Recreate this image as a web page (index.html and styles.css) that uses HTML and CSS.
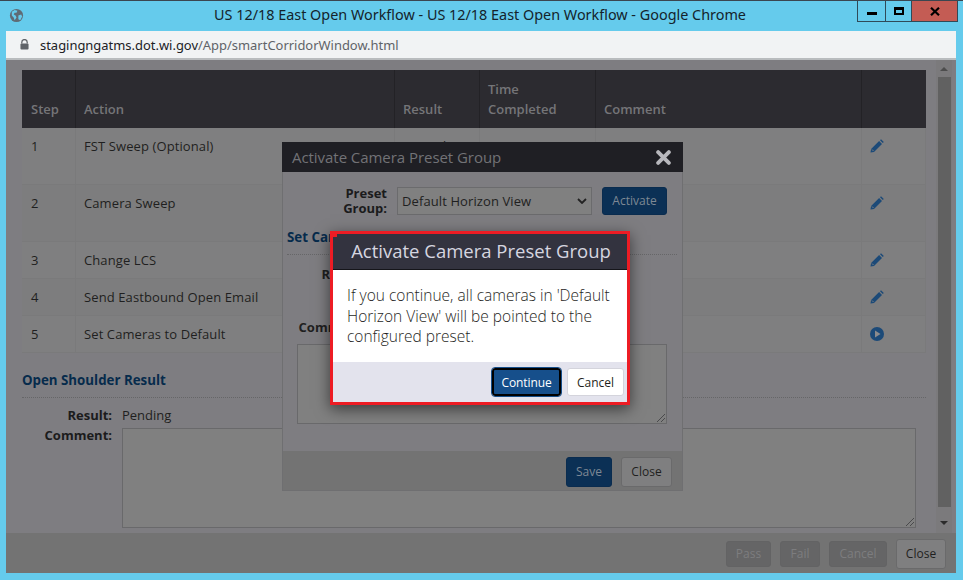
FILE: index.html
```html
<!DOCTYPE html>
<html lang="en">
<head>
<meta charset="utf-8">
<title>US 12/18 East Open Workflow</title>
<link rel="stylesheet" href="styles.css">
</head>
<body>
<div class="window">
  <header class="titlebar">
    <svg class="globe" viewBox="0 0 16 16" width="15" height="15"><circle cx="8" cy="8" r="7" fill="#5f6b75"/><path d="M3 4l3-2 3 1-1 2-2 0-1 2 2 1 1 2-2 3-1-3-2-2zM10 8l3-1 1 2-2 4-2-1z" fill="#65cbec"/></svg>
    <span class="wintitle">US 12/18 East Open Workflow - US 12/18 East Open Workflow - Google Chrome</span>
    <div class="wincontrols">
      <div class="wc wc-min"><i></i></div>
      <div class="wc wc-max"><i></i></div>
      <div class="wc wc-close"><svg viewBox="0 0 10 9" width="10" height="9"><path d="M1 0.8L9 8.2M9 0.8L1 8.2" stroke="#000" stroke-width="2.2"/></svg></div>
    </div>
  </header>
  <div class="addressbar">
    <svg class="lock" viewBox="0 0 10 12" width="9" height="11"><path d="M2 5V3.500a3 3 0 0 1 6 0V5" fill="none" stroke="#5f6368" stroke-width="1.400"/><rect x="0.500" y="5" width="9" height="6.500" rx="1" fill="#5f6368"/></svg>
    <span class="host">stagingngatms.dot.wi.gov</span><span class="path">/App/smartCorridorWindow.html</span>
  </div>
  <main class="content">
    <div class="scrollarea">
      <div class="page">
        <table class="steps">
          <thead>
            <tr><th class="c-step">Step</th><th class="c-action">Action</th><th class="c-result">Result</th><th class="c-time">Time<br>Completed</th><th class="c-comment">Comment</th><th class="c-edit"></th></tr>
          </thead>
          <tbody>
            <tr class="r57 odd"><td>1</td><td>FST Sweep (Optional)</td><td>Passed</td><td>06/23/2020</td><td></td><td><svg class="ico" viewBox="0 0 14 14" width="14" height="14"><path d="M0.500 13.500l0.600-3.500 8-8 2.900 2.900-8 8zM10 1.200l1-1 2.800 2.800-1 1z" fill="#1c4a78"/><path d="M2 10.500l1.500 1.500" stroke="#7f7f80"/></svg></td></tr>
            <tr class="r57"><td>2</td><td>Camera Sweep</td><td></td><td></td><td></td><td><svg class="ico" viewBox="0 0 14 14" width="14" height="14"><path d="M0.500 13.500l0.600-3.500 8-8 2.900 2.900-8 8zM10 1.200l1-1 2.800 2.800-1 1z" fill="#1c4a78"/><path d="M2 10.500l1.500 1.500" stroke="#7f7f80"/></svg></td></tr>
            <tr class="r37 odd"><td>3</td><td>Change LCS</td><td></td><td></td><td></td><td><svg class="ico" viewBox="0 0 14 14" width="14" height="14"><path d="M0.500 13.500l0.600-3.500 8-8 2.900 2.900-8 8zM10 1.200l1-1 2.800 2.800-1 1z" fill="#1c4a78"/><path d="M2 10.500l1.500 1.500" stroke="#7f7f80"/></svg></td></tr>
            <tr class="r37"><td>4</td><td>Send Eastbound Open Email</td><td></td><td></td><td></td><td><svg class="ico" viewBox="0 0 14 14" width="14" height="14"><path d="M0.500 13.500l0.600-3.500 8-8 2.900 2.900-8 8zM10 1.200l1-1 2.800 2.800-1 1z" fill="#1c4a78"/><path d="M2 10.500l1.500 1.500" stroke="#7f7f80"/></svg></td></tr>
            <tr class="r37 odd"><td>5</td><td>Set Cameras to Default</td><td></td><td></td><td></td><td><svg class="ico" viewBox="0 0 14 14" width="14" height="14"><circle cx="7" cy="7" r="7" fill="#1c4a78"/><path d="M5 3.500l5.500 3.500-5.500 3.500z" fill="#8b8b8d"/></svg></td></tr>
          </tbody>
        </table>
        <h3 class="section">Open Shoulder Result</h3>
        <div class="formrow"><label>Result:</label><span>Pending</span></div>
        <div class="formrow"><label>Comment:</label><div class="textarea big"><svg class="grip" viewBox="0 0 9 9" width="9" height="9"><path d="M1 9L9 1M5 9L9 5" stroke="#4a4a4c"/></svg></div></div>
      </div>
      <div class="scrollbar">
        <div class="arrow up"></div>
        <div class="thumb"></div>
        <div class="arrow down"></div>
      </div>
    </div>
    <footer class="pagefoot">
      <button class="btn dis w45">Pass</button><button class="btn dis w40">Fail</button><button class="btn dis w58">Cancel</button><button class="btn plain w50">Close</button>
    </footer>

    <section class="modal-back">
      <div class="mb-head"><span>Activate Camera Preset Group</span><svg viewBox="0 0 14 14" width="15" height="15"><path d="M2 2L12 12M12 2L2 12" stroke="#b8b8bd" stroke-width="3.600" stroke-linecap="round"/></svg></div>
      <div class="mb-body">
        <div class="preset"><label>Preset<br>Group:</label><div class="select">Default Horizon View<svg viewBox="0 0 10 6" width="10" height="6"><path d="M1 1l4 4 4-4" fill="none" stroke="#222" stroke-width="1.800"/></svg></div><button class="btn blue w65">Activate</button></div>
        <h4 class="section sub">Set Camera Result</h4>
        <div class="mb-row"><label>Result:</label></div>
        <div class="mb-row mb-c"><label>Comment:</label></div>
        <div class="textarea small"><svg class="grip" viewBox="0 0 9 9" width="9" height="9"><path d="M1 9L9 1M5 9L9 5" stroke="#4a4a4c"/></svg></div>
      </div>
      <div class="mb-foot"><button class="btn blue w46">Save</button><button class="btn plain w51">Close</button></div>
    </section>

    <section class="modal-front">
      <div class="mf-head">Activate Camera Preset Group</div>
      <div class="mf-body">If you continue, all cameras in 'Default Horizon View' will be pointed to the configured preset.</div>
      <div class="mf-foot"><button class="mf-btn go">Continue</button><button class="mf-btn no">Cancel</button></div>
    </section>
  </main>
</div>
</body>
</html>
```
FILE: styles.css
```css
* { box-sizing: border-box; }
html, body { margin: 0; height: 100%; }
body { font-family: "Open Sans", "Noto Sans", sans-serif; font-size: 13px; color: #1f1f20; overflow: hidden; }
.window { width: 963px; height: 580px; background: #65cbec; border-top: 1px solid #3b4650; display: flex; flex-direction: column; padding: 0 7px 7px 6px; }
.titlebar { height: 30px; flex: none; display: flex; align-items: center; position: relative; margin: 0 -7px 0 -6px; padding-left: 9px; }
.globe { flex: none; margin-top: -1px; }
.wintitle { position: absolute; left: 0; width: 960px; text-align: center; font-family: "Noto Sans", "Open Sans", sans-serif; font-size: 14.4px; color: #14232b; top: 4px; line-height: 20px; }
.wincontrols { position: absolute; right: 5px; top: 0; display: flex; height: 21px; border: 1px solid #2f4a58; border-top: 0; }
.wc { display: flex; align-items: center; justify-content: center; height: 20px; }
.wc-min { width: 28px; border-right: 1px solid #2f4a58; }
.wc-min i { display: block; width: 10px; height: 3px; background: #000; margin-top: 5px; }
.wc-max { width: 26px; border-right: 1px solid #2f4a58; }
.wc-max i { display: block; width: 10px; height: 8px; border: 2px solid #000; border-top-width: 3px; }
.wc-close { width: 45px; background: #c45c54; }
.addressbar { height: 29px; flex: none; background: #f1f3f4; border-bottom: 2px solid #b9bcbe; display: flex; align-items: center; padding-left: 14px; font-family: "Noto Sans", "Open Sans", sans-serif; font-size: 12.95px; }
.lock { margin-right: 11px; }
.host { color: #202124; }
.path { color: #5f6368; }
.content { flex: 1; position: relative; background: #7e7d81; display: flex; flex-direction: column; min-height: 0; overflow: hidden; }
.scrollarea { flex: 1; display: flex; min-height: 0; }
.page { flex: 1; padding: 10px 10px 0 16px; min-width: 0; }
.steps { width: 904px; border-collapse: separate; border-spacing: 0; table-layout: fixed; }
.steps th { background: #2c2b30; color: #757578; font-weight: 600; font-size: 13px; text-align: left; vertical-align: bottom; padding: 0 8px 9px; line-height: 20px; height: 58px; border-right: 1px solid #232226; }
.steps th:first-child, .steps td:first-child { padding-left: 9px; }
.steps th:last-child { border-right: 0; }
.c-step { width: 54px; } .c-action { width: 319px; } .c-result { width: 85px; } .c-time { width: 116px; } .c-comment { width: 266px; } .c-edit { width: 64px; }
.steps td { padding: 9px 8px 0 8px; vertical-align: top; line-height: 18px; letter-spacing: .1px; border-right: 1px solid #7a7a7b; border-bottom: 1px solid #7a7a7b; background: #7d7d7e; color: #1f1f20; }
.steps tr.odd td { background: #7f7f80; }
.r57 td { height: 57px; }
.r37 td { height: 37px; }
.ico { display: block; margin-top: 2px; }
.section { margin: 0; color: #062b4c; font-size: 13.3px; font-weight: 700; }
.page > .section { margin-top: 18px; padding-bottom: 8px; border-bottom: 1px dotted #666668; height: 27px; line-height: 18px; }
.formrow { display: flex; margin-top: 8px; line-height: 18px; }
.formrow + .formrow { margin-top: 2px; }
.formrow label { width: 90px; text-align: right; font-weight: 700; margin-right: 10px; color: #1b1b1c; flex: none; }
.textarea { background: #808080; border: 1px solid #69696b; position: relative; }
.textarea.big { width: 794px; height: 100px; margin-top: 2px; }
.textarea.small { width: 370px; height: 80px; margin-left: 14px; margin-top: 8px; }
.grip { position: absolute; right: 1px; bottom: 1px; }
.scrollbar { width: 16px; flex: none; margin-right: 4px; background: #7b7a7c; display: flex; flex-direction: column; align-items: center; }
.thumb { width: 13px; height: 430px; background: #616161; margin-top: 2px; flex: none; }
.arrow { height: 15px; flex: none; width: 100%; position: relative; }
.arrow.down { margin-top: auto; }
.arrow::after { content: ""; position: absolute; left: 4px; border: 4px solid transparent; }
.up::after { top: 3px; border-bottom: 4px solid #4d4d4d; }
.down::after { top: 3px; border-top: 4px solid #2b2b2b; }
.pagefoot { height: 40px; flex: none; background: #737373; display: flex; justify-content: flex-end; align-items: center; gap: 9px; padding: 2px 10px 0 0; }
.btn { font-family: inherit; font-size: 12px; height: 26px; border-radius: 3px; padding: 0; border: 1px solid transparent; line-height: 1; }
.w40 { width: 40px; } .w45 { width: 45px; } .w46 { width: 46px; } .w50 { width: 50px; } .w51 { width: 51px; } .w58 { width: 58px; } .w65 { width: 65px; }
.btn.dis { background: #656566; color: #7d7d7f; border-color: #636364; }
.btn.plain { background: #7f7f80; color: #1f1f20; border-color: #6a6a6b; height: 30px; }
.btn.blue { background: #0b3055; color: #7e8894; border-color: #0a2c4f; height: 30px; }
.modal-back { position: absolute; left: 276px; top: 82px; width: 401px; height: 349px; background: #7e7d81; border: 1px solid #6f6f71; border-top: 0; display: flex; flex-direction: column; }
.mb-head { height: 30px; flex: none; background: #1f1f24; color: #727276; font-size: 15px; letter-spacing: -.05px; display: flex; align-items: center; justify-content: space-between; padding: 0 12px 0 10px; margin: 0 -1px; }
.mb-body { flex: 1; position: relative; padding: 15px 0 0 0; }
.mb-foot { height: 39px; flex: none; background: #737373; display: flex; justify-content: flex-end; align-items: center; gap: 9px; padding: 3px 10px 0 0; }
.preset { display: flex; align-items: center; height: 28px; }
.preset label { width: 104px; text-align: right; font-weight: 700; line-height: 15px; font-size: 13px; margin-right: 10px; color: #1b1b1c; }
.select { width: 195px; height: 28px; border: 1px solid #6b6b6d; background: #808080; display: flex; align-items: center; justify-content: space-between; padding: 0 4px; margin-right: 10px; letter-spacing: .1px; }
.btn.w65 { height: 28px; }
.sub { margin: 14px 5px 0 4px; height: 26px; border-bottom: 1px dotted #666668; line-height: 16px; }
.mb-row label { display: block; width: 83px; text-align: right; font-weight: 700; }
.mb-row { margin-top: 10px; line-height: 18px; }
.mb-row.mb-c { margin-top: 35px; }
.modal-front { position: absolute; left: 324px; top: 171px; width: 300px; height: 174px; background: #fff; border: 3px solid #ed1c24; box-shadow: 0 4px 14px rgba(0,0,0,.55); display: flex; flex-direction: column; }
.modal-front::before { content: ""; position: absolute; left: 0; top: 0; width: 4px; height: 3px; background: #ed1c24; }
.mf-head { height: 36px; flex: none; background: #33333f; color: #d6d6e0; font-size: 18.5px; text-align: center; line-height: 34px; padding-left: 2px; border-bottom: 1px solid #15151a; }
.mf-body { flex: 1; padding: 15px 10px 0 14px; font-size: 15.5px; font-weight: 300; line-height: 20.500px; color: #1f1f24; }
.mf-foot { height: 40px; flex: none; background: #e3e3ed; display: flex; justify-content: flex-end; align-items: center; gap: 6px; padding-right: 3px; }
.mf-btn { font-family: inherit; font-size: 12px; height: 28px; border-radius: 3px; padding: 0; }
.mf-btn.go { width: 69px; background: #164f8b; color: #fff; border: 2px solid #000; outline: 1px solid #164f8b; letter-spacing: -.1px; }
.mf-btn.no { width: 57px; background: #fff; color: #1f1f20; border: 1px solid #d4d4dc; }
```
